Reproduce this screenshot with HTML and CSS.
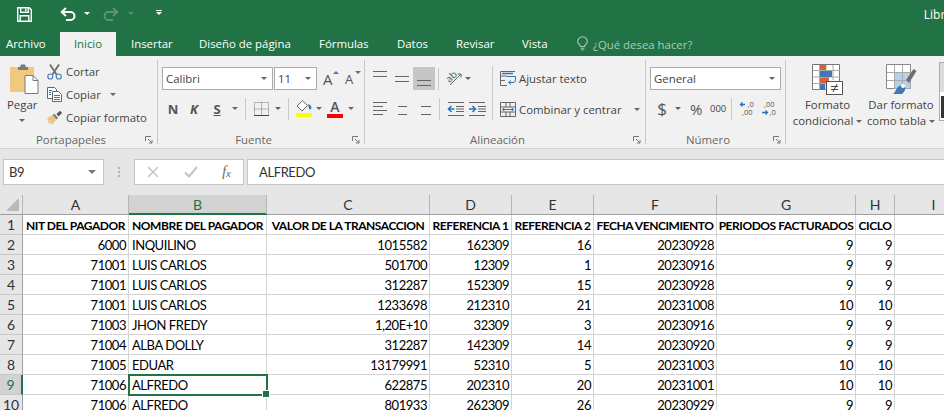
FILE: index.html
```html
<!DOCTYPE html>
<html lang="es">
<head>
<meta charset="utf-8">
<title>Libro - Excel</title>
<link rel="stylesheet" href="styles.css">
</head>
<body>
<header class="title-bar">
  <svg class="qa-save" width="15" height="15" viewBox="0 0 15 15" fill="none" stroke="#fff" stroke-width="1.4"><path d="M.7.7h11.6l2 2v11.6H.7z"/><path d="M3.7 1v4.3h7.6V1M3.2 14V8.7h8.6V14"/><path d="M8.8 1.5v2.8" /></svg>
  <svg class="qa-undo" width="16" height="15" viewBox="0 0 16 15" fill="none" stroke="#fff" stroke-width="2"><path d="M6 1 1.7 5 6 9"/><path d="M2 5h8.5a3.8 3.8 0 0 1 0 8H6"/></svg>
  <span class="caret caret-white qa-caret1"></span>
  <svg class="qa-redo" width="16" height="15" viewBox="0 0 16 15" fill="none" stroke="#5a9475" stroke-width="2"><path d="M10 1l4.3 4L10 9"/><path d="M14 5H5.5a3.8 3.8 0 0 0 0 8H10"/></svg>
  <span class="caret caret-dim qa-caret2"></span>
  <span class="qa-custom"><i></i><span class="caret caret-white"></span></span>
  <span class="doc-title">Libro1 - Excel</span>
</header>
<nav class="tabs">
  <span class="tab tab-file">Archivo</span>
  <span class="tab tab-active">Inicio</span>
  <span class="tab tab-ins">Insertar</span>
  <span class="tab tab-dis">Diseño de página</span>
  <span class="tab tab-for">Fórmulas</span>
  <span class="tab tab-dat">Datos</span>
  <span class="tab tab-rev">Revisar</span>
  <span class="tab tab-vis">Vista</span>
  <svg class="bulb" width="11" height="14" viewBox="0 0 11 14" fill="none" stroke="#a9cbb8" stroke-width="1.1"><path d="M3.5 9.5C3 7.5 .7 7 .7 4.5a4.8 4.8 0 0 1 9.6 0c0 2.500-2.300 3-2.800 5z"/><path d="M3.500 11.300h4M4.300 13h2.400"/></svg>
  <span class="tell">¿Qué desea hacer?</span>
</nav>

<section class="ribbon">
  <div class="group g-clip">
    <div class="body clip-body">
      <div class="paste">
        <svg width="29" height="30" viewBox="0 0 29 30"><rect x="0" y="3" width="24" height="25" rx="1" fill="#f0c87e"/><path d="M8 3h2l1-2.500h4l1 2.500h2v3H8z" fill="#7b7b7b"/><path d="M15 11.500h8l5 5v13H15z" fill="#fff" stroke="#7b7b7b"/><path d="M23 11.500v5h5" fill="none" stroke="#7b7b7b"/></svg>
        <span class="paste-label">Pegar</span>
        <span class="caret paste-caret"></span>
      </div>
      <div class="clip-list">
        <div class="clip-row"><svg width="15" height="16" viewBox="0 0 15 16" fill="none"><path d="M3 .5l6.500 10M12 .5 5.500 10.500" stroke="#6e6e6e" stroke-width="1.800"/><circle cx="3.300" cy="12.500" r="2.500" stroke="#4a7fb8" stroke-width="1.200"/><circle cx="11.700" cy="12.500" r="2.500" stroke="#4a7fb8" stroke-width="1.200"/></svg><span>Cortar</span></div>
        <div class="clip-row"><svg width="15" height="15" viewBox="0 0 15 15" fill="#fff" stroke="#666"><path d="M.5.500h7l2 2v9h-9z"/><path d="M5.500 4.500h6l3 3v7h-9z"/><path d="M7 8.500h6M7 10.500h6M7 12.500h6" stroke="#3f78b5"/><path d="M2 3.500h3M2 5.500h2M2 7.500h2" stroke="#3f78b5"/></svg><span>Copiar</span><span class="caret copy-caret"></span></div>
        <div class="clip-row"><svg class="brush" width="17" height="15" viewBox="0 0 17 15"><path d="M1 9l5-4 4 5-3 4H4l1-2-3 1.500L1.500 12 3 11z" fill="#efc47c"/><path d="M6.500 5l3.800 4.500L12 8 8.500 3.700z" fill="#7a7a7a"/><path d="M10.500 4 14 .700 16 3l-3.500 3.500z" fill="#555"/></svg><span>Copiar formato</span></div>
      </div>
    </div>
    <div class="label"><i></i><span>Portapapeles</span><svg class="launch" width="8" height="8" viewBox="0 0 8 8" fill="none" stroke="#777"><path d="M.5 5V.500H6M3 3l4 4M7 4v3H4"/></svg></div>
  </div>

  <div class="group g-font">
    <div class="body">
      <div class="row row-top">
        <span class="select sel-font">Calibri<span class="caret"></span></span>
        <span class="select sel-size">11<span class="caret"></span></span>
        <span class="grow g-up">A<b></b></span>
        <span class="grow g-down">A<b></b></span>
      </div>
      <div class="row row-bot">
        <span class="bt bt-n">N</span>
        <span class="bt bt-k">K</span>
        <span class="bt bt-s">S</span>
        <span class="caret c-s"></span>
        <i class="sep sep-1"></i>
        <svg width="15" height="14" viewBox="0 0 15 14" fill="none" stroke="#777" stroke-dasharray="1 1"><path d="M.5.500h14v13H.5zM7.500.500v13M.5 7h14"/><path d="M0 13.500h15" stroke="#444" stroke-dasharray="none"/></svg>
        <span class="caret c-b"></span>
        <i class="sep sep-2"></i>
        <span class="fill"><svg width="16" height="12" viewBox="0 0 16 12"><path d="M6.500.700 1 6l5 5 5.500-5.500z" fill="#fff" stroke="#666"/><path d="M12 4c2 .500 3.500 2 3.500 3.500S14 10 13 9z" fill="#3f78b5"/></svg><b></b></span>
        <span class="caret c-f"></span>
        <span class="color">A<b></b></span>
        <span class="caret c-a"></span>
      </div>
    </div>
    <div class="label"><i></i><span>Fuente</span><svg class="launch" width="8" height="8" viewBox="0 0 8 8" fill="none" stroke="#777"><path d="M.5 5V.500H6M3 3l4 4M7 4v3H4"/></svg></div>
  </div>

  <div class="group g-align">
    <div class="body align-body">
      <div class="align-col">
        <div class="row row-top">
          <span class="lines l-top"><i></i><i></i></span>
          <span class="lines l-mid"><i></i><i></i></span>
          <span class="lines l-bot on"><i></i><i></i></span>
          <i class="sep sep-3"></i>
          <svg class="orient" width="17" height="17" viewBox="0 0 17 17" fill="none"><text x="1" y="11" transform="rotate(-45 5 9)" class="ab">ab</text><path d="M4 15 15 4M15 4h-3.500M15 4v3.500" stroke="#666"/></svg>
          <span class="caret c-o"></span>
        </div>
        <div class="row row-bot">
          <span class="lines h-left"><i></i><i></i><i></i><i></i></span>
          <span class="lines h-center"><i></i><i></i><i></i><i></i></span>
          <span class="lines h-right"><i></i><i></i><i></i><i></i></span>
          <i class="sep sep-4"></i>
          <svg class="indent1" width="17" height="14" viewBox="0 0 17 14" fill="none"><path d="M1 .500h16M1 13.500h16M9 4.500h8M9 7h8M9 9.500h8" stroke="#666"/><path d="M7.500 7H1.500M4.500 4 1.500 7l3 3" stroke="#2f75b5" stroke-width="1.600"/></svg>
          <svg class="indent2" width="17" height="14" viewBox="0 0 17 14" fill="none"><path d="M0 .500h16M0 13.500h16M9 4.500h8M9 7h8M9 9.500h8" stroke="#666"/><path d="M0 7h6M3.500 4l3 3-3 3" stroke="#2f75b5" stroke-width="1.600"/></svg>
        </div>
      </div>
      <i class="vsep"></i>
      <div class="merge-col">
        <div class="merge-row"><svg width="16" height="15" viewBox="0 0 16 15" fill="none"><path d="M.5.500H15M.5 5H7M.5 9.500H5M.5 14.500H7M.5.500v14" stroke="#666"/><path d="M2 2.500h11" stroke="#2f75b5" stroke-width="1.500"/><path d="M7 5.500h8.500v3.500a2.500 2.500 0 0 1-2.500 2.500H9M11 9.500l-2.500 2 2.500 2" stroke="#2f75b5"/></svg><span>Ajustar texto</span></div>
        <div class="merge-row"><svg width="16" height="15" viewBox="0 0 16 15" fill="none"><path d="M.5.500h15v14H.5zM.5 5h15M.5 10h15M6 .500V5M10 .500V5M6 10v4.500M10 10v4.500" stroke="#666"/><path d="M2.500 7.500h11M4.500 5.800l-2 1.700 2 1.700M11.500 5.800l2 1.700-2 1.700" stroke="#2f75b5"/></svg><span>Combinar y centrar</span><span class="caret c-m"></span></div>
      </div>
    </div>
    <div class="label"><i></i><span>Alineación</span><svg class="launch" width="8" height="8" viewBox="0 0 8 8" fill="none" stroke="#777"><path d="M.5 5V.500H6M3 3l4 4M7 4v3H4"/></svg></div>
  </div>

  <div class="group g-num">
    <div class="body">
      <div class="row row-top"><span class="select sel-num">General<span class="caret"></span></span></div>
      <div class="row row-bot">
        <span class="n-dollar">$</span><span class="caret c-d"></span>
        <span class="n-pct">%</span><span class="n-000">000</span>
        <i class="sep sep-5"></i>
        <svg class="dec1" width="15" height="15" viewBox="0 0 15 15" fill="none"><path d="M6 3.500H1.500M3.500 1.500l-2 2 2 2" stroke="#2f75b5" stroke-width="1.300"/><text x="8.500" y="6" class="dec">,0</text><text x="3" y="14" class="dec">,00</text></svg>
        <svg class="dec2" width="15" height="15" viewBox="0 0 15 15" fill="none"><text x="3" y="6" class="dec">,00</text><path d="M1 11.500h5.500M4.500 9.500l2 2-2 2" stroke="#2f75b5" stroke-width="1.300"/><text x="8.500" y="14" class="dec">,0</text></svg>
      </div>
    </div>
    <div class="label"><i></i><span>Número</span><svg class="launch" width="8" height="8" viewBox="0 0 8 8" fill="none" stroke="#777"><path d="M.5 5V.500H6M3 3l4 4M7 4v3H4"/></svg></div>
  </div>

  <div class="group g-style">
    <div class="style-btn sb-cond">
      <svg width="31" height="31" viewBox="0 0 31 31" fill="none"><path d="M.5.500h27v25H.5z" fill="#fff" stroke="#777"/><path d="M7.500 1v25M14 1v25M21 1v15M1 6.500h27M1 13h27M1 19.500h15" stroke="#aaa"/><rect x="8" y="1" width="6" height="5" fill="#d9603b"/><rect x="8" y="7" width="12" height="6" fill="#3f78b5"/><rect x="8" y="13.500" width="9" height="5.500" fill="#d9603b"/><rect x="8" y="20" width="5" height="6" fill="#3f78b5"/><rect x="14.500" y="17.500" width="16" height="13" fill="#fff" stroke="#555"/><path d="M19 22.500h7M19 25.500h7M25 20l-4 8" stroke="#444"/></svg>
      <span class="style-text">Formato</span>
      <span class="style-text">condicional<span class="caret"></span></span>
    </div>
    <div class="style-btn sb-tab">
      <svg width="31" height="31" viewBox="0 0 31 31" fill="none"><path d="M.5.500h24v24H.5z" fill="#fff" stroke="#888"/><path d="M8.500 8.500h16v16h-16z" fill="#b8cfe8"/><path d="M8.500 1v24M16.500 1v24M1 8.500h24M1 16.500h24" stroke="#aaa"/><path d="M20 16 27.500 5 30.500 7 23 19z" fill="#6e6e6e"/><path d="M7 30c2-1 3-5 5-7 3-2.500 6-1.500 7 0 1 2-.500 5-3 7z" fill="#3f78b5"/><circle cx="17" cy="22" r="2" fill="#fff"/></svg>
      <span class="style-text">Dar formato</span>
      <span class="style-text">como tabla<span class="caret"></span></span>
    </div>
    <div class="gallery"><i></i><b></b></div>
  </div>
</section>

<section class="formula-bar">
  <div class="name-box">B9<span class="caret"></span></div>
  <div class="grip"><i></i><i></i><i></i></div>
  <div class="fx-box">
    <svg width="12" height="12" viewBox="0 0 12 12" fill="none" stroke="#c4c4c4" stroke-width="1.500"><path d="M1 1l10 10M11 1 1 11"/></svg>
    <svg width="14" height="12" viewBox="0 0 14 12" fill="none" stroke="#c4c4c4" stroke-width="2"><path d="M1 6.500 5 10.500 13 1"/></svg>
    <span class="fx">f<sub>x</sub></span>
  </div>
  <div class="formula">ALFREDO</div>
</section>

<section class="sheet">
  <div class="hd corner"><i></i></div><div class="hd">A</div><div class="hd hd-on">B</div><div class="hd">C</div><div class="hd">D</div><div class="hd">E</div><div class="hd">F</div><div class="hd">G</div><div class="hd">H</div><div class="hd">I</div>

  <div class="rh">1</div><div class="c b">NIT DEL PAGADOR</div><div class="c b">NOMBRE DEL PAGADOR</div><div class="c b">VALOR DE LA TRANSACCION</div><div class="c b">REFERENCIA 1</div><div class="c b">REFERENCIA 2</div><div class="c b">FECHA VENCIMIENTO</div><div class="c b">PERIODOS FACTURADOS</div><div class="c b">CICLO</div><div class="c"></div>

  <div class="rh">2</div><div class="c r">6000</div><div class="c">INQUILINO</div><div class="c r">1015582</div><div class="c r">162309</div><div class="c r">16</div><div class="c r">20230928</div><div class="c r">9</div><div class="c r">9</div><div class="c"></div>

  <div class="rh">3</div><div class="c r">71001</div><div class="c">LUIS CARLOS</div><div class="c r">501700</div><div class="c r">12309</div><div class="c r">1</div><div class="c r">20230916</div><div class="c r">9</div><div class="c r">9</div><div class="c"></div>

  <div class="rh">4</div><div class="c r">71001</div><div class="c">LUIS CARLOS</div><div class="c r">312287</div><div class="c r">152309</div><div class="c r">15</div><div class="c r">20230928</div><div class="c r">9</div><div class="c r">9</div><div class="c"></div>

  <div class="rh">5</div><div class="c r">71001</div><div class="c">LUIS CARLOS</div><div class="c r">1233698</div><div class="c r">212310</div><div class="c r">21</div><div class="c r">20231008</div><div class="c r">10</div><div class="c r">10</div><div class="c"></div>

  <div class="rh">6</div><div class="c r">71003</div><div class="c">JHON FREDY</div><div class="c r">1,20E+10</div><div class="c r">32309</div><div class="c r">3</div><div class="c r">20230916</div><div class="c r">9</div><div class="c r">9</div><div class="c"></div>

  <div class="rh">7</div><div class="c r">71004</div><div class="c">ALBA DOLLY</div><div class="c r">312287</div><div class="c r">142309</div><div class="c r">14</div><div class="c r">20230920</div><div class="c r">9</div><div class="c r">9</div><div class="c"></div>

  <div class="rh">8</div><div class="c r">71005</div><div class="c">EDUAR</div><div class="c r">13179991</div><div class="c r">52310</div><div class="c r">5</div><div class="c r">20231003</div><div class="c r">10</div><div class="c r">10</div><div class="c"></div>

  <div class="rh rh-on">9</div><div class="c r">71006</div><div class="c selected">ALFREDO<span class="handle"></span></div><div class="c r">622875</div><div class="c r">202310</div><div class="c r">20</div><div class="c r">20231001</div><div class="c r">10</div><div class="c r">10</div><div class="c"></div>

  <div class="rh">10</div><div class="c r">71006</div><div class="c">ALFREDO</div><div class="c r">801933</div><div class="c r">262309</div><div class="c r">26</div><div class="c r">20230929</div><div class="c r">9</div><div class="c r">9</div><div class="c"></div>
</section>
</body>
</html>
```

FILE: styles.css
```css
* { box-sizing: border-box; }
html, body { margin: 0; height: 410px; overflow: hidden; }
body { width: 944px; background: #e6e6e6; font: 11.400px "Open Sans", "Noto Sans", sans-serif; color: #444; }
i, b { display: block; font-style: normal; }
svg { overflow: visible; }

.caret { display: inline-block; width: 0; height: 0; border: 3px solid transparent; border-top: 3.500px solid #666; border-bottom: 0; flex: none; }
.caret-white { border-top-color: #fff; }
.caret-dim { border-top-color: #5a9475; }

.title-bar { height: 32px; background: #217346; display: flex; align-items: flex-start; padding: 7px 0 0 17px; white-space: nowrap; }
.qa-undo { margin-left: 28px; }
.qa-caret1 { margin: 5px 0 0 8px; }
.qa-redo { margin-left: 13px; }
.qa-caret2 { margin: 5px 0 0 9px; }
.qa-custom { margin: 3px 0 0 22px; display: flex; flex-direction: column; gap: 1px; width: 6px; }
.qa-custom i { height: 1px; background: #fff; }
.doc-title { margin-left: auto; margin-right: -54px; color: #fff; font-size: 12px; line-height: 16px; }

.tabs { height: 24px; background: #217346; display: flex; align-items: stretch; color: #fff; white-space: nowrap; }
.tab { display: flex; align-items: center; line-height: 24px; }
.tab-file { margin-left: 6px; width: 54px; }
.tab-active { width: 56px; background: #f1f1f1; color: #217346; justify-content: center; }
.tab-ins { margin-left: 15px; width: 68px; }
.tab-dis { width: 120px; }
.tab-for { width: 78px; }
.tab-dat { width: 59px; }
.tab-rev { width: 66px; }
.tab-vis { width: 55px; }
.bulb { align-self: center; }
.tell { margin-left: 5px; color: #a9cbb8; align-self: center; }

.ribbon { height: 93px; background: #f1f1f1; border-bottom: 1px solid #d2d2d2; display: flex; padding-top: 4px; white-space: nowrap; }
.group { height: 88px; display: flex; flex-direction: column; background: linear-gradient(#c8c8c8, #c8c8c8) right top / 1px 84px no-repeat; }
.g-clip { width: 158px; }
.g-font { width: 207px; }
.g-align { width: 281px; }
.g-num { width: 140px; }
.g-style { width: 158px; background: none; flex-direction: row; }
.body { flex: 1; padding-top: 7px; }
.label { height: 17px; padding: 1px 16px 0 0; display: grid; grid-template-columns: 1fr auto 1fr; align-items: center; color: #666; line-height: 16px; }
.launch { justify-self: end; margin-right: -11px; }

.clip-body { display: flex; padding: 0; }
.paste { width: 47px; padding: 4px 0 0 10px; display: flex; flex-direction: column; }
.paste-label { margin: 3px 0 0 -3px; line-height: 16px; }
.paste-caret { margin: 6px 0 0 9px; }
.clip-list { display: flex; flex-direction: column; }
.clip-row { height: 23px; display: flex; align-items: center; gap: 4px; }
.clip-row svg { flex: none; }
.clip-row .brush { margin: 0 -1px; }
.copy-caret { margin-left: 5px; }

.row { display: flex; align-items: center; }
.row-top { height: 23px; }
.row-bot { height: 23px; margin-top: 7px; }
.g-font .row, .g-num .row { padding-left: 4px; }

.select { height: 23px; background: #fff; border: 1px solid #ababab; display: flex; align-items: center; justify-content: space-between; padding: 0 5px 0 3px; color: #444; }
.sel-font { width: 111px; }
.sel-size { width: 43px; margin-left: 1px; }
.sel-num { width: 131px; }
.grow { position: relative; font-size: 15px; line-height: 16px; width: 13px; color: #555; }
.grow b { position: absolute; width: 0; height: 0; border: 3px solid transparent; right: -3px; }
.g-up { margin-left: 6px; }
.g-up b { border-bottom: 3.500px solid #3f78b5; border-top: 0; top: 0; }
.g-down { margin-left: 9px; font-size: 13px; }
.g-down b { border-top: 3.500px solid #3f78b5; border-bottom: 0; top: 0; }

.bt { width: 22px; text-align: center; font-size: 13px; font-weight: 700; color: #555; }
.bt-k { font-style: italic; margin-left: -1px; }
.bt-s { text-decoration: underline; margin-left: 1px; }
.c-s { margin-left: 4px; }
.sep { width: 1px; height: 22px; background: #c8c8c8; flex: none; }
.sep-1 { margin: 0 8px 0 7px; }
.c-b { margin-left: 6px; }
.sep-2 { margin: 0 7px 0 7px; }
.fill { display: flex; flex-direction: column; width: 16px; }
.fill b { height: 4px; background: #ffff00; margin-top: 1px; }
.c-f { margin-left: 4px; }
.color { margin-left: 5px; width: 16px; text-align: center; font-size: 14px; font-weight: 600; line-height: 15px; color: #555; }
.color b { height: 4px; background: #ff0000; }
.c-a { margin-left: 5px; }

.align-body { display: flex; padding-left: 8px; }
.align-col { width: 119px; }
.lines { display: flex; flex-direction: column; gap: 3px; width: 14px; flex: none; }
.lines i { height: 1px; background: #666; }
.l-top { height: 23px; margin-right: 8px; padding-top: 4px; }
.l-mid { height: 23px; margin-right: 4px; justify-content: center; }
.l-bot { height: 23px; width: 22px; padding: 0 4px 4px; justify-content: flex-end; }
.l-bot.on { background: #c6c6c6; }
.l-top, .l-mid, .l-bot { gap: 4px; }
.sep-3 { margin: 0 7px 0 3px; }
.c-o { margin-left: 2px; }
.ab { font-size: 10px; fill: #555; }
.h-left, .h-center, .h-right { gap: 3px; margin-right: 8px; }
.h-left i:nth-child(even) { width: 10px; }
.h-center { align-items: center; }
.h-center i:nth-child(even) { width: 9px; }
.h-right { align-items: flex-end; }
.h-right i:nth-child(even) { width: 10px; }
.sep-4 { margin: 0 7px 0 0; }
.indent1 { margin-right: 5px; }
.vsep { width: 1px; height: 54px; margin-top: -1px; background: #c8c8c8; flex: none; }
.merge-col { padding-left: 7px; }
.merge-row { height: 23px; display: flex; align-items: center; gap: 3px; }
.merge-row + .merge-row { margin-top: 8px; }
.c-m { margin-left: 9px; }

.n-dollar { font-size: 17px; width: 12px; margin-left: 6px; color: #555; text-align: center; }
.c-d { margin-left: 7px; }
.n-pct { font-size: 15px; margin-left: 9px; color: #555; width: 16px; }
.n-000 { font-size: 9.500px; margin-left: 4px; width: 17px; }
.sep-5 { margin: 0 7px 0 4px; }
.dec { font-size: 7.500px; fill: #555; }
.dec2 { margin-left: 7px; }

.style-btn { display: flex; flex-direction: column; align-items: center; padding-top: 4px; line-height: 16px; }
.style-btn svg { margin-bottom: 2px; }
.sb-cond { width: 78px; padding-left: 9px; padding-right: 4px; }
.sb-tab { width: 72px; padding-left: 2px; }
.style-text { display: flex; align-items: center; gap: 3px; }
.style-text + .style-text .caret { margin-top: 1px; }
.gallery { margin: 2px 0 0 3px; flex: 1; height: 59px; border: 1px solid #ababab; border-right: 0; background: #fff; }
.gallery i { height: 29px; background: #dcdcdc; }
.gallery b { height: 22px; background: #333; margin: 4px 0 0 1px; }

.formula-bar { height: 46px; display: flex; padding: 10px 0 10px 3px; align-items: stretch; }
.name-box { width: 101px; background: #fff; border: 1px solid #c6c6c6; display: flex; align-items: center; justify-content: space-between; padding: 0 7px 0 5px; font: 13px Lato, sans-serif; letter-spacing: -.3px; color: #333; }
.name-box .caret { border-width: 4px; border-bottom: 0; border-top-color: #777; }
.grip { width: 30px; display: flex; flex-direction: column; align-items: center; justify-content: center; gap: 2px; }
.grip i { width: 2px; height: 2px; background: #b0b0b0; }
.fx-box { width: 110px; background: #fff; border: 1px solid #c6c6c6; display: flex; align-items: center; justify-content: space-between; padding: 0 12px; }
.fx { font: italic 14px "Liberation Serif", serif; color: #666; }
.fx sub { font-size: 11px; vertical-align: -1px; line-height: 0; }
.formula { flex: 1; margin-left: 3px; background: #fff; border: 1px solid #c6c6c6; border-right: 0; padding-left: 11px; display: flex; align-items: center; font: 13px Lato, sans-serif; letter-spacing: -.4px; color: #333; }

.sheet { display: grid; grid-template-columns: 23px 106px 138px 163px 82px 82px 123px 139px 39px 78px; grid-auto-rows: 20px; background: #fff; font: 13px/19px Lato, sans-serif; letter-spacing: -.45px; color: #000; white-space: nowrap; }
.hd { background: #e6e6e6; border-right: 1px solid #b5b5b5; border-bottom: 1px solid #9f9f9f; text-align: center; color: #333; font-size: 14px; letter-spacing: 0; }
.hd-on { background: #d2d2d2; color: #217346; border-bottom: 2px solid #217346; }
.corner { position: relative; }
.corner i { position: absolute; right: 3px; bottom: 3px; width: 0; height: 0; border-left: 13px solid transparent; border-bottom: 13px solid #b9b9b9; }
.rh { background: #e6e6e6; border-right: 1px solid #9f9f9f; border-bottom: 1px solid #c6c6c6; text-align: center; color: #333; font-size: 14px; letter-spacing: 0; }
.rh-on { background: #d2d2d2; color: #217346; border-right: 2px solid #217346; }
.c { border-right: 1px solid #d4d4d4; border-bottom: 1px solid #d4d4d4; padding: 1px 2px 0 3px; }
.b { font-weight: 700; text-align: center; font-size: 12px; letter-spacing: -.45px; padding: 1px 0 0; }
.r { text-align: right; }
.selected { position: relative; }
.selected::before { content: ""; position: absolute; inset: -1px -2px -2px -1px; border: 2px solid #217346; }
.handle { position: absolute; right: -3px; bottom: -3px; width: 6px; height: 6px; background: #217346; border: 1px solid #fff; box-sizing: content-box; margin: -1px; }
```
